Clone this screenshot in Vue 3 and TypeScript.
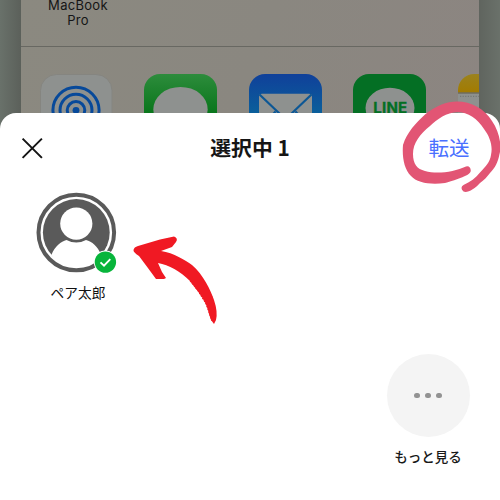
<script setup lang="ts">
import { ref } from 'vue'

interface Friend {
  name: string
  selected: boolean
}

const friends = ref<Friend[]>([{ name: 'ペア太郎', selected: true }])
const rings: number[] = [8.8, 16, 23.1]
</script>

<template>
  <main class="screen">
    <section class="backdrop">
      <div class="share-panel">
        <div class="device-row">
          <p class="device">MacBook<br />Pro</p>
        </div>
        <div class="app-row">
          <svg class="app" viewBox="0 0 73 73">
            <rect x="0.5" y="0.5" width="71.5" height="72" rx="16" fill="#8e918f" stroke="#858580" />
            <g fill="none" stroke="#07499a" stroke-width="3">
              <circle v-for="r in rings" :key="r" cx="36" cy="36.3" :r="r" />
            </g>
            <circle cx="36" cy="36.3" r="3.4" fill="#07499a" />
          </svg>
          <svg class="app" viewBox="0 0 73 73">
            <defs>
              <linearGradient id="messages" x1="0" y1="0" x2="0" y2="1">
                <stop offset="0" stop-color="#2d8c3c" />
                <stop offset="0.55" stop-color="#08751a" />
                <stop offset="1" stop-color="#006b10" />
              </linearGradient>
            </defs>
            <rect width="73" height="73" rx="16" fill="url(#messages)" />
            <ellipse cx="36.5" cy="35.5" rx="27.2" ry="22.6" fill="#8e918f" />
          </svg>
          <svg class="app" viewBox="0 0 73 73">
            <defs>
              <linearGradient id="mail" x1="0" y1="0" x2="0" y2="1">
                <stop offset="0" stop-color="#10409a" />
                <stop offset="0.55" stop-color="#0a609b" />
                <stop offset="1" stop-color="#0876a0" />
              </linearGradient>
            </defs>
            <rect width="73" height="73" rx="16" fill="url(#mail)" />
            <rect x="10" y="19.7" width="53" height="36" rx="3" fill="#8e918f" />
            <path d="M10.5 20.5L32 41Q36.5 45 41 41L62.5 20.5M11 55L26.5 37.5M62 55L46.5 37.5" fill="none" stroke="#0c5795" stroke-width="2.2" />
          </svg>
          <svg class="app" viewBox="0 0 73 73">
            <rect width="73" height="73" rx="16" fill="#046f24" />
            <ellipse cx="37" cy="34" rx="24.5" ry="20.3" fill="#8e918f" />
            <text x="37.2" y="39.3" class="line-logo" textLength="34" lengthAdjust="spacing">LINE</text>
          </svg>
          <svg class="app" viewBox="0 0 73 73">
            <defs>
              <clipPath id="note-shape"><rect width="73" height="73" rx="16" /></clipPath>
              <linearGradient id="note-top" x1="0" y1="0" x2="0" y2="1">
                <stop offset="0" stop-color="#9a821f" />
                <stop offset="1" stop-color="#a37b00" />
              </linearGradient>
            </defs>
            <g clip-path="url(#note-shape)">
              <rect width="73" height="73" fill="#8e918f" />
              <rect width="73" height="18.5" fill="url(#note-top)" />
              <path d="M0 19H73" stroke="#5e5a48" />
              <path d="M2 22.3H73" stroke="#6f726f" stroke-dasharray="1.2 1.4" />
            </g>
          </svg>
        </div>
      </div>
    </section>

    <section class="sheet">
      <header class="bar">
        <svg class="close" viewBox="0 0 22 22">
          <path d="M1.6 1.6L20.9 20.9M20.9 1.6L1.6 20.9" fill="none" stroke="#151515" stroke-width="2" />
        </svg>
        <h1 class="title">選択中 1</h1>
        <span class="forward">転送</span>
      </header>

      <div class="friends">
        <div v-for="friend in friends" :key="friend.name" class="friend">
          <svg class="avatar" viewBox="0 0 82 82">
            <defs>
              <clipPath id="portrait"><circle cx="40.3" cy="40.5" r="33.4" /></clipPath>
            </defs>
            <circle cx="40.3" cy="40.5" r="37.8" fill="#fff" stroke="#5a5a5a" stroke-width="4" />
            <rect width="82" height="82" fill="#5a5a5a" clip-path="url(#portrait)" />
            <path d="M15.4 63C19 54 25 49.5 30.5 48Q40.3 53 50 48C56 49.5 61.5 54 65.2 63C59 71 50 75 40.3 75S21 71 15.4 63Z" fill="#fff" />
            <circle cx="40.3" cy="31.6" r="16.1" fill="#fff" />
            <g v-if="friend.selected">
              <circle cx="69.4" cy="70.1" r="11.6" fill="#fff" />
              <circle cx="69.4" cy="70.1" r="10.7" fill="#08b53b" />
              <path d="M64.5 70.4L68 73.7L74.3 67.2" fill="none" stroke="#fff" stroke-width="1.9" />
            </g>
          </svg>
          <span class="friend-name">{{ friend.name }}</span>
        </div>
      </div>

      <div class="more">
        <div class="more-button"><i class="dot" /><i class="dot" /><i class="dot" /></div>
        <span class="more-label">もっと見る</span>
      </div>
    </section>

    <svg class="marks" viewBox="0 0 500 500">
      <path
        fill="#e25574"
        d="M466 166.5Q470.5 165.5 470.8 171Q470 174 465 176C458 179.5 450 181.5 445 183C431 185 417 183 411 176C404 169 402 157 403 145C407 132 416 123 425 114.5C435 106 447 101.5 457 101.5C471 101.5 485 109 492 121C499 131 502 145 499.5 154C498 162 495 168 490 173C487 177 484 180 480 183C475 189 467 193.5 463.5 191.5Q459.5 187.5 463.5 185C470 182 476 178 480 172.5C486 166 490 162 491 155C493 146 490 137 484 129C478 119 468 112 457 112C447 112.5 437 119 430 126C420 134 413 143 413 154C413 164 417 169 425 171C437 174.5 454 172 466 166.5Z"
      />
      <path
        fill="#f01923"
        d="M133.5 250Q134 247 138 246L160 239.5L174 236.5Q178.5 238 176 242L172 247L161 251C174 253 185 260 192 265C203 274 211 291 214 300Q218 312 216 320L214 324L211 320L209 314C207 303 200 294 196 289L190 281C180 271 169 265 158 263L162 272L166 278L164 279H156Q148 268 139 256Q133 252 133.5 250Z"
      />
      <path d="M158 251.5L177 258L191 266L203 280L212 297M190 281L198 291L206 304L212 321" fill="none" stroke="#f01923" stroke-width="1" stroke-dasharray="2 1" />
    </svg>
  </main>
</template>

<style scoped>
.screen {
  position: relative;
  display: flex;
  flex-direction: column;
  width: 500px;
  height: 500px;
  overflow: hidden;
  background: #fff;
  font-family: "Noto Sans CJK JP", "Noto Sans", sans-serif;
}

.backdrop {
  flex: none;
  height: 140px;
  padding: 0 21px;
  background: linear-gradient(90deg, #69716a, #5c615b 4%, #60655f 96%, #6a716a);
}

.share-panel {
  height: 140px;
  background: linear-gradient(110deg, #8b8980, #8a8780 50%, #8c8581);
  overflow: hidden;
}

.device-row {
  box-sizing: border-box;
  height: 47px;
  border-bottom: 1px solid #686862;
}

.device {
  width: 114px;
  margin: 0;
  color: #151515;
  font-family: Inter, sans-serif;
  font-size: 13px;
  line-height: 15px;
  letter-spacing: 0.3px;
  text-align: center;
  transform: translateY(-2px);
}

.app-row {
  display: flex;
  gap: 31.4px;
  padding: 26.5px 0 0 19px;
}

.app {
  flex: none;
  width: 73px;
  height: 73px;
}

.line-logo {
  fill: #046f24;
  stroke: #046f24;
  stroke-width: 0.3px;
  font-family: Inter, sans-serif;
  font-size: 15px;
  font-weight: 700;
  text-anchor: middle;
}

.sheet {
  display: flex;
  flex: none;
  flex-direction: column;
  box-sizing: border-box;
  height: 387px;
  margin-top: -27px;
  border-radius: 16px 16px 0 0;
  background: #fff;
}

.bar {
  display: grid;
  grid-template-columns: 1fr auto 1fr;
  align-items: center;
  flex: none;
  height: 70px;
  padding: 0 30.5px 0 21px;
}

.close {
  width: 22px;
  height: 22px;
}

.title {
  margin: -2px 0 0;
  padding-left: 9.5px;
  color: #151515;
  font-size: 20.8px;
  font-weight: 700;
  line-height: 30px;
}

.forward {
  margin-top: -2px;
  color: #4a70ff;
  font-size: 20.5px;
  line-height: 30px;
  text-align: right;
}

.friends {
  display: flex;
  flex: none;
  height: 171px;
  padding: 9px 0 0 36px;
}

.friend {
  display: flex;
  flex-direction: column;
  align-items: center;
  width: 84px;
}

.avatar {
  flex: none;
  width: 82px;
  height: 82px;
  align-self: flex-start;
}

.friend-name {
  margin-top: 8px;
  color: #111;
  font-size: 13.7px;
  line-height: 20px;
}

.more {
  display: flex;
  flex: none;
  flex-direction: column;
  align-items: center;
  align-self: flex-end;
  width: 83px;
  margin-right: 30.5px;
  margin-top: -9px;
}

.more-button {
  display: flex;
  align-items: center;
  justify-content: center;
  gap: 5px;
  width: 83px;
  height: 83px;
  border-radius: 50%;
  background: #f4f4f4;
}

.dot {
  width: 5.7px;
  height: 5.7px;
  border-radius: 50%;
  background: #929292;
}

.more-label {
  margin-top: 9px;
  color: #191919;
  font-size: 13.5px;
  font-weight: 500;
  line-height: 20px;
  white-space: nowrap;
}

.marks {
  position: absolute;
  inset: 0;
  width: 500px;
  height: 500px;
  pointer-events: none;
}
</style>

<style>
body {
  margin: 0;
  background: #fff;
}
</style>
